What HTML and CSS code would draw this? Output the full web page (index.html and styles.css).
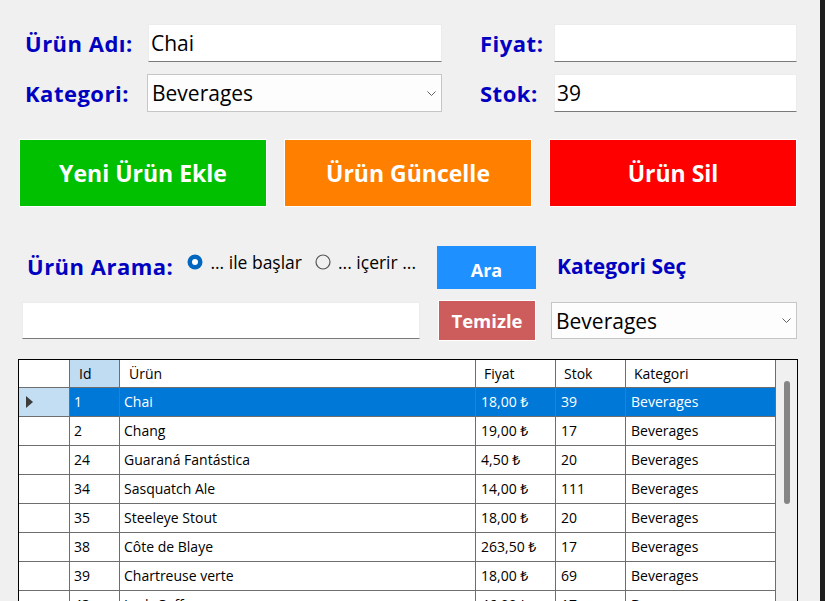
FILE: index.html
```html
<!DOCTYPE html>
<html lang="tr">
<head>
<meta charset="utf-8">
<title>Ürün Yönetimi</title>
<link rel="stylesheet" href="styles.css">
</head>
<body>
<div class="app">
  <main class="form">
    <section class="fields">
      <label class="lbl">Ürün Adı:</label>
      <div class="tb">Chai</div>
      <span class="spacer"></span>
      <label class="lbl">Fiyat:</label>
      <div class="tb"></div>
      <label class="lbl">Kategori:</label>
      <div class="cb cb-main"><span>Beverages</span><svg class="chev" width="9" height="5" viewBox="0 0 9 5"><path d="M0.5 0.5 L4.5 4.5 L8.5 0.5" fill="none" stroke="#606060" stroke-width="1"/></svg></div>
      <span class="spacer"></span>
      <label class="lbl">Stok:</label>
      <div class="tb">39</div>
    </section>

    <section class="actions">
      <button class="btn btn-add">Yeni Ürün Ekle</button>
      <button class="btn btn-update">Ürün Güncelle</button>
      <button class="btn btn-delete">Ürün Sil</button>
    </section>

    <section class="search">
      <div class="search-head">
        <span class="lbl lbl-search">Ürün Arama:</span>
        <span class="radio"><svg width="16" height="16" viewBox="0 0 16 16"><circle cx="8" cy="8" r="7.5" fill="#0067c0"/><circle cx="8" cy="8" r="3" fill="#ffffff"/></svg>... ile başlar</span>
        <span class="radio"><svg width="16" height="16" viewBox="0 0 16 16"><circle cx="8" cy="8" r="7" fill="none" stroke="#555555" stroke-width="1.2"/></svg>... içerir ...</span>
      </div>
      <button class="btn btn-find">Ara</button>
      <span class="lbl lbl-cat">Kategori Seç</span>
      <div class="tb tb-search"></div>
      <button class="btn btn-clear">Temizle</button>
      <div class="cb cb-filter"><span>Beverages</span><svg class="chev" width="9" height="5" viewBox="0 0 9 5"><path d="M0.5 0.5 L4.5 4.5 L8.5 0.5" fill="none" stroke="#606060" stroke-width="1"/></svg></div>
    </section>

    <section class="grid">
      <div class="table">
        <div class="row head">
          <div class="c rh"></div>
          <div class="c hc cur">Id</div>
          <div class="c hc">Ürün</div>
          <div class="c hc">Fiyat</div>
          <div class="c hc">Stok</div>
          <div class="c hc">Kategori</div>
        </div>
        <div class="row sel">
          <div class="c rh rh-cur"><svg width="8" height="12" viewBox="0 0 8 12"><polygon points="0,0 7,6 0,12" fill="#3c3c3c"/></svg></div>
          <div class="c">1</div><div class="c">Chai</div><div class="c">18,00 ₺</div><div class="c">39</div><div class="c">Beverages</div>
        </div>
        <div class="row">
          <div class="c rh"></div>
          <div class="c">2</div><div class="c">Chang</div><div class="c">19,00 ₺</div><div class="c">17</div><div class="c">Beverages</div>
        </div>
        <div class="row">
          <div class="c rh"></div>
          <div class="c">24</div><div class="c">Guaraná Fantástica</div><div class="c">4,50 ₺</div><div class="c">20</div><div class="c">Beverages</div>
        </div>
        <div class="row">
          <div class="c rh"></div>
          <div class="c">34</div><div class="c">Sasquatch Ale</div><div class="c">14,00 ₺</div><div class="c">111</div><div class="c">Beverages</div>
        </div>
        <div class="row">
          <div class="c rh"></div>
          <div class="c">35</div><div class="c">Steeleye Stout</div><div class="c">18,00 ₺</div><div class="c">20</div><div class="c">Beverages</div>
        </div>
        <div class="row">
          <div class="c rh"></div>
          <div class="c">38</div><div class="c">Côte de Blaye</div><div class="c">263,50 ₺</div><div class="c">17</div><div class="c">Beverages</div>
        </div>
        <div class="row">
          <div class="c rh"></div>
          <div class="c">39</div><div class="c">Chartreuse verte</div><div class="c">18,00 ₺</div><div class="c">69</div><div class="c">Beverages</div>
        </div>
        <div class="row">
          <div class="c rh"></div>
          <div class="c">43</div><div class="c">Ipoh Coffee</div><div class="c">46,00 ₺</div><div class="c">17</div><div class="c">Beverages</div>
        </div>
      </div>
      <div class="vscroll"><div class="thumb"></div></div>
    </section>
  </main>
  <div class="edge"></div>
</div>
</body>
</html>
```

FILE: styles.css
```css
html, body {
  margin: 0;
  padding: 0;
}
body {
  width: 825px;
  height: 601px;
  overflow: hidden;
  background: #f0f0f0;
  font-family: "Open Sans", "Noto Sans", sans-serif;
  color: #000;
}
.app {
  display: flex;
  height: 601px;
}
.form {
  width: 820px;
  flex: none;
  padding-top: 24px;
  box-sizing: border-box;
}
.edge {
  width: 5px;
  flex: none;
  background: #1e1e1e;
}

.lbl {
  font-weight: 700;
  font-size: 22px;
  letter-spacing: 0.5px;
  color: #0000c0;
  white-space: nowrap;
  line-height: 26px;
}

.fields {
  display: grid;
  grid-template-columns: 123px 294px 38px 74px 243px;
  grid-template-rows: 38px 38px;
  row-gap: 12px;
  align-items: center;
  padding-left: 25px;
}
.tb {
  height: 100%;
  box-sizing: border-box;
  background: #fff;
  border: 1px solid #ececec;
  border-bottom: 1px solid #7a7a7a;
  font-size: 21px;
  line-height: 36px;
  padding-left: 2px;
}
.cb {
  height: 100%;
  box-sizing: border-box;
  background: #fdfdfd;
  border: 1px solid #c6c6c6;
  font-size: 21px;
  line-height: 36px;
  padding-left: 4px;
  padding-right: 5px;
  display: flex;
  align-items: center;
  justify-content: space-between;
}
.cb-main {
  margin-left: -1px;
}
.chev {
  flex: none;
}

.actions {
  display: flex;
  gap: 17px;
  margin-top: 27px;
  padding-left: 19px;
}
.btn {
  font-family: "Open Sans", "Noto Sans", sans-serif;
  font-weight: 700;
  color: #fff;
  border: 1px solid #fff;
  padding: 0;
  margin: 0;
  cursor: pointer;
}
.actions .btn {
  width: 248px;
  height: 68px;
  font-size: 23px;
}
.btn-add { background: #00c000; }
.btn-update { background: #ff8000; }
.btn-delete { background: #ff0000; }

.search {
  display: grid;
  grid-template-columns: 415px 114px 246px;
  grid-template-rows: 43px 41px;
  row-gap: 11px;
  margin-top: 39px;
  padding-left: 22px;
  align-items: center;
}
.search-head {
  display: flex;
  align-items: center;
  padding-left: 5px;
  height: 100%;
}
.lbl-search {
  margin-right: 14px;
  padding-bottom: 3px;
}
.radio {
  display: flex;
  align-items: center;
  gap: 7px;
  font-size: 17.5px;
  line-height: 20px;
  margin-right: 13px;
  align-self: flex-start;
  margin-top: 6px;
}
.radio svg {
  flex: none;
}
.btn-find {
  background: #1e90ff;
  height: 43px;
  width: 99px;
  font-size: 18px;
  border: none;
  padding-top: 4px;
}
.lbl-cat {
  font-size: 21px;
  letter-spacing: 0;
  padding-left: 6px;
  padding-bottom: 4px;
}
.tb-search {
  height: 37px;
  width: 398px;
}
.btn-clear {
  background: #cd5c5c;
  height: 41px;
  width: 98px;
  font-size: 18.5px;
  margin-left: 1px;
}
.cb-filter {
  height: 37px;
}

.grid {
  margin-top: 18px;
  margin-left: 18px;
  width: 780px;
  height: 260px;
  box-sizing: border-box;
  border: 1px solid #000;
  display: flex;
  background: #f0f0f0;
}
.table {
  width: 757px;
  flex: none;
  background: #fff;
}
.row {
  display: grid;
  grid-template-columns: 51px 50px 356px 80px 70px 150px;
  height: 29px;
}
.row.head {
  height: 28px;
}
.c {
  box-sizing: border-box;
  border-right: 1px solid #6e6e6e;
  border-bottom: 1px solid #6e6e6e;
  font-size: 14px;
  line-height: 28px;
  padding-left: 4px;
  white-space: nowrap;
  overflow: hidden;
}
.head .c {
  line-height: 27px;
}
.c:nth-child(n+4) {
  padding-left: 5px;
}
.hc {
  padding-left: 9px;
}
.head .hc:nth-child(n+4) {
  padding-left: 8px;
}
.hc.cur {
  background: #bfdcf3;
}
.rh {
  background: #fff;
  padding-left: 0;
}
.rh-cur {
  background: #c3ddf3;
  display: flex;
  align-items: center;
  padding-left: 7px;
}
.sel .c:not(.rh) {
  background: #0078d7;
  color: #fff;
}
.vscroll {
  flex: 1;
  background: #f0f0f0;
}
.thumb {
  margin-top: 21px;
  margin-left: 8px;
  width: 6px;
  height: 123px;
  background: #858585;
  border-radius: 3px;
}
```
